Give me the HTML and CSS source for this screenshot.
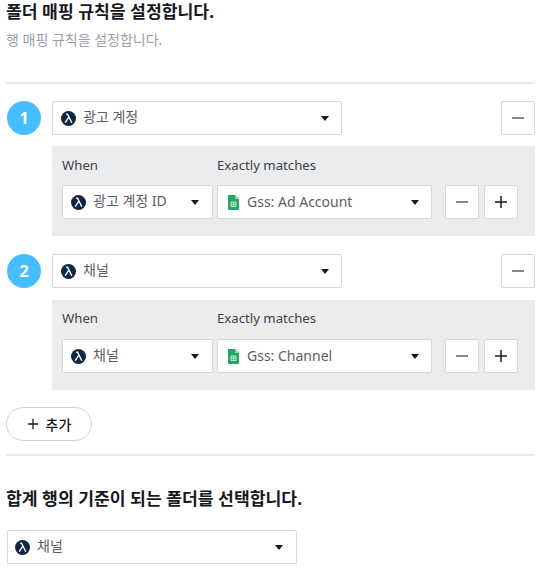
FILE: index.html
```html
<!DOCTYPE html>
<html lang="ko">
<head>
    <meta charset="UTF-8">
    <meta name="viewport" content="width=device-width, initial-scale=1.0">
    <title>폴더 매핑 규칙</title>
    <link rel="stylesheet" href="styles.css">
</head>
<body>
    <svg class="defs" width="0" height="0">
        <symbol id="logo" viewBox="0 0 16 16">
            <circle cx="8" cy="8" r="8" fill="#0f2742"/>
            <path d="M5.500 3.500h1.500L11.500 12.500M8 7 4.500 12.500" fill="none" stroke="#fff" stroke-width="1.500"/>
        </symbol>
        <symbol id="sheet" viewBox="0 0 11 15">
            <path d="M0 1.200C0 .5.5 0 1.200 0H7l4 4v9.800c0 .7-.5 1.200-1.200 1.200H1.200C.5 15 0 14.500 0 13.800z" fill="#23a566"/>
            <path d="M7 0l4 4H7z" fill="#8ed1b1"/>
            <path d="M3 7h5v4.500H3zM5.500 7v4.500M3 9.200h5" fill="none" stroke="#d6f0e2" stroke-width=".9"/>
        </symbol>
        <symbol id="minus" viewBox="0 0 14 14">
            <path d="M1 7h12" stroke="currentColor" stroke-width="1.500"/>
        </symbol>
        <symbol id="plus" viewBox="0 0 14 14">
            <path d="M1 7h12M7 1v12" stroke="currentColor" stroke-width="1.500"/>
        </symbol>
    </svg>

    <section class="intro">
        <h2>폴더 매핑 규칙을 설정합니다.</h2>
        <p>행 매핑 규칙을 설정합니다.</p>
    </section>

    <hr class="line line-top">

    <div class="rule">
        <div class="rule-head">
            <span class="step">1</span>
            <button class="select select-main">
                <svg class="logo"><use href="#logo"/></svg>
                <span class="select-text">광고 계정</span>
                <span class="caret"></span>
            </button>
            <button class="icon-btn icon-btn-end"><svg class="icon minus"><use href="#minus"/></svg></button>
        </div>
        <div class="panel">
            <div class="panel-labels">
                <span class="label-when">When</span>
                <span>Exactly matches</span>
            </div>
            <div class="panel-row">
                <button class="select select-when">
                    <svg class="logo"><use href="#logo"/></svg>
                    <span class="select-text">광고 계정 ID</span>
                    <span class="caret"></span>
                </button>
                <button class="select select-match">
                    <svg class="sheet"><use href="#sheet"/></svg>
                    <span class="select-text latin">Gss: Ad Account</span>
                    <span class="caret"></span>
                </button>
                <button class="icon-btn icon-btn-first"><svg class="icon minus"><use href="#minus"/></svg></button>
                <button class="icon-btn"><svg class="icon"><use href="#plus"/></svg></button>
            </div>
        </div>
    </div>

    <div class="rule">
        <div class="rule-head">
            <span class="step">2</span>
            <button class="select select-main">
                <svg class="logo"><use href="#logo"/></svg>
                <span class="select-text">채널</span>
                <span class="caret"></span>
            </button>
            <button class="icon-btn icon-btn-end"><svg class="icon minus"><use href="#minus"/></svg></button>
        </div>
        <div class="panel">
            <div class="panel-labels">
                <span class="label-when">When</span>
                <span>Exactly matches</span>
            </div>
            <div class="panel-row">
                <button class="select select-when">
                    <svg class="logo"><use href="#logo"/></svg>
                    <span class="select-text">채널</span>
                    <span class="caret"></span>
                </button>
                <button class="select select-match">
                    <svg class="sheet"><use href="#sheet"/></svg>
                    <span class="select-text latin">Gss: Channel</span>
                    <span class="caret"></span>
                </button>
                <button class="icon-btn icon-btn-first"><svg class="icon minus"><use href="#minus"/></svg></button>
                <button class="icon-btn"><svg class="icon"><use href="#plus"/></svg></button>
            </div>
        </div>
    </div>

    <button class="add-btn"><svg class="icon"><use href="#plus"/></svg>추가</button>

    <hr class="line line-bottom">

    <h2 class="total-title">합계 행의 기준이 되는 폴더를 선택합니다.</h2>
    <button class="select select-total">
        <svg class="logo"><use href="#logo"/></svg>
        <span class="select-text">채널</span>
        <span class="caret"></span>
    </button>
</body>
</html>
```

FILE: styles.css
```css
* {
    margin: 0;
    padding: 0;
    box-sizing: border-box;
    font-family: "Noto Sans", "Noto Sans CJK KR", sans-serif;
}

body {
    background: #fff;
    color: #16191f;
    width: 538px;
    height: 577px;
    padding: 0 3px 0 6px;
    overflow: hidden;
}

.defs {
    position: absolute;
}

h2 {
    font-size: 17.2px;
    line-height: 24px;
    font-weight: 700;
    color: #16191f;
}

.intro p {
    margin-top: 4px;
    font-size: 14px;
    line-height: 24px;
    color: #9a9fa6;
}

.line {
    border: 0;
    height: 2px;
    background: #e6e8ea;
}

.line-top {
    margin-top: 30px;
}

.line-bottom {
    margin-top: 13px;
}

.rule {
    margin-top: 17px;
}

.rule + .rule {
    margin-top: 18px;
}

.rule-head {
    display: flex;
    align-items: center;
    height: 34px;
}

.step {
    width: 34px;
    height: 34px;
    margin-left: 1px;
    border-radius: 50%;
    background: #47bdff;
    color: #fff;
    font-size: 16px;
    font-weight: 700;
    display: flex;
    align-items: center;
    justify-content: center;
    flex-shrink: 0;
}

.select {
    display: flex;
    align-items: center;
    height: 34px;
    background: #fff;
    border: 1px solid #d5d7da;
    border-radius: 2px;
    font-size: 14px;
    color: #5b6068;
    text-align: left;
}

.select-text {
    flex: 1;
    white-space: nowrap;
    line-height: 20px;
    padding-bottom: 3px;
}

.latin {
    padding-bottom: 1px;
}

.logo {
    width: 15px;
    height: 15px;
    margin-right: 7px;
    flex-shrink: 0;
}

.sheet {
    width: 11px;
    height: 15px;
    margin-right: 8px;
    flex-shrink: 0;
}

.caret {
    width: 0;
    height: 0;
    border-left: 4.500px solid transparent;
    border-right: 4.500px solid transparent;
    border-top: 5px solid #16191f;
    flex-shrink: 0;
}

.select-main {
    width: 290px;
    margin-left: 11px;
    padding: 0 12px 0 8px;
}

.icon-btn {
    width: 34px;
    height: 34px;
    background: #fff;
    border: 1px solid #d5d7da;
    border-radius: 2px;
    color: #16191f;
    display: flex;
    align-items: center;
    justify-content: center;
    flex-shrink: 0;
}

.icon-btn-end {
    margin-left: 159px;
}

.icon-btn-first {
    margin-left: 13px;
    margin-right: 5px;
}

.icon {
    width: 14px;
    height: 14px;
}

.minus {
    color: #5b6068;
}

.panel {
    margin: 11px 0 0 46px;
    width: 483px;
    height: 90px;
    background: #eaecee;
    padding: 9px 10px 0;
}

.rule + .rule .panel {
    margin-top: 12px;
}

.rule + .rule .panel-labels {
    margin-top: -1px;
}

.rule + .rule .panel-row {
    margin-top: 11px;
}

.panel-labels {
    display: flex;
    font-size: 13.200px;
    line-height: 20px;
    color: #3d4249;
}

.label-when {
    width: 155px;
}

.panel-row {
    display: flex;
    margin-top: 10px;
}

.select-when {
    width: 151px;
    margin-right: 4px;
    padding: 0 13px 0 8px;
}

.select-match {
    width: 215px;
    padding: 0 12px 0 10px;
}

.add-btn {
    display: flex;
    align-items: center;
    justify-content: center;
    gap: 7px;
    width: 86px;
    height: 34px;
    margin-top: 17px;
    padding-bottom: 1px;
    background: #fff;
    border: 1px solid #cfd2d5;
    border-radius: 17px;
    font-size: 14px;
    font-weight: 500;
    color: #16191f;
}

.add-btn .icon {
    width: 12px;
    height: 12px;
}

.total-title {
    margin-top: 31px;
}

.select-total {
    width: 290px;
    margin: 19px 0 0 1px;
    padding: 0 13px 0 7px;
}
```
